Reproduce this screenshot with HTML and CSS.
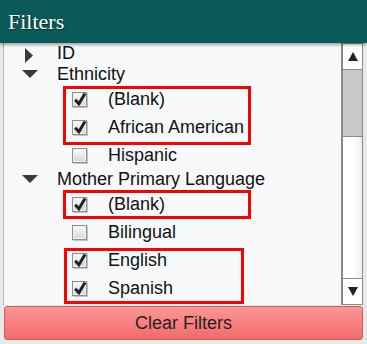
FILE: index.html
```html
<!DOCTYPE html>
<html lang="en">
<head>
	<meta charset="utf-8" />
	<title>Filters</title>
	<link rel="stylesheet" href="styles.css">
</head>
<body>
	<div class="panel">
		<div class="header">Filters</div>
		<div class="body">
			<div class="list">
				<div class="group-row">
					<svg class="caret" width="16" height="21" viewBox="0 0 16 21"><polygon points="3,5 11,12.5 3,20" /></svg>
					<span>ID</span>
				</div>
				<div class="group-row">
					<svg class="caret" width="16" height="21" viewBox="0 0 16 21"><polygon points="0,6 16,6 8,14" /></svg>
					<span>Ethnicity</span>
				</div>
				<div class="item"><span class="cb"><svg width="13" height="13" viewBox="0 0 13 13"><path d="M2.2 6.8 L5.9 10.8 L12 0.6" /></svg></span><span>(Blank)</span></div>
				<div class="item"><span class="cb"><svg width="13" height="13" viewBox="0 0 13 13"><path d="M2.2 6.8 L5.9 10.8 L12 0.6" /></svg></span><span>African American</span></div>
				<div class="item"><span class="cb"></span><span>Hispanic</span></div>
				<div class="group-row">
					<svg class="caret" width="16" height="21" viewBox="0 0 16 21"><polygon points="0,6 16,6 8,14" /></svg>
					<span>Mother Primary Language</span>
				</div>
				<div class="item"><span class="cb"><svg width="13" height="13" viewBox="0 0 13 13"><path d="M2.2 6.8 L5.9 10.8 L12 0.6" /></svg></span><span>(Blank)</span></div>
				<div class="item"><span class="cb"></span><span>Bilingual</span></div>
				<div class="item"><span class="cb"><svg width="13" height="13" viewBox="0 0 13 13"><path d="M2.2 6.8 L5.9 10.8 L12 0.6" /></svg></span><span>English</span></div>
				<div class="item"><span class="cb"><svg width="13" height="13" viewBox="0 0 13 13"><path d="M2.2 6.8 L5.9 10.8 L12 0.6" /></svg></span><span>Spanish</span></div>

				<!-- highlight marks drawn over the list -->
				<div class="mark mark-a"></div>
				<div class="mark mark-b"></div>
				<div class="mark mark-c"></div>
			</div>
			<div class="scrollbar">
				<div class="sb-btn sb-up"><span class="arrow-up"></span></div>
				<div class="sb-thumb"></div>
				<div class="sb-track"></div>
				<div class="sb-btn sb-down"><span class="arrow-down"></span></div>
			</div>
		</div>
		<button class="clear">Clear Filters</button>
	</div>
</body>
</html>
```

FILE: styles.css
```css
body {
	margin: 0;
	background-color: #e9e9e9;
	font-family: "Liberation Sans", Arial, sans-serif;
}

.panel {
	width: 367px;
	height: 344px;
	display: flex;
	flex-direction: column;
}

.header {
	height: 43px;
	box-sizing: border-box;
	padding: 8px 0 0 8px;
	font-family: "Liberation Serif", "Times New Roman", serif;
	font-size: 22px;
	line-height: 28px;
	color: #fff;
	text-shadow: 1px 1px 1px rgba(0,0,0,0.45);
	background-color: #0b5a5a;
	box-shadow: 0 2px 3px rgba(0,0,0,0.35);
	position: relative;
	z-index: 1;
}

.body {
	display: flex;
	height: 262px;
	margin: 0 4px 0 3px;
	border-left: 1px solid #b5b5b5;
	background-color: #f7f9fb;
}

.list {
	flex: 1;
	position: relative;
	overflow: hidden;
	color: #111;
	font-size: 18px;
}

.group-row {
	height: 21px;
	line-height: 21px;
	display: flex;
	align-items: center;
}

.caret {
	margin-left: 18px;
	margin-right: 19px;
	fill: #3a3a3a;
}

.item {
	height: 28px;
	line-height: 21px;
	display: flex;
	align-items: center;
}

.cb {
	display: flex;
	width: 13px;
	height: 13px;
	margin-left: 68px;
	margin-right: 21px;
	border: 1px solid #8f8f8f;
	background: linear-gradient(#fbfbfb, #d6d6d6);
	box-shadow: inset 0 0 0 1px #f2f2f2, 1px 1px 0 #c4c4c4;
}

.cb svg {
	overflow: visible;
}

.cb path {
	fill: none;
	stroke: #222;
	stroke-width: 3;
}

.mark {
	position: absolute;
	box-sizing: border-box;
	border: 3px solid #ff0000;
}

.mark-a {
	left: 59px;
	top: 43px;
	width: 188px;
	height: 59px;
}

.mark-b {
	left: 59px;
	top: 147px;
	width: 188px;
	height: 29px;
}

.mark-c {
	left: 60px;
	top: 205px;
	width: 180px;
	height: 56px;
}

.scrollbar {
	width: 22px;
	box-sizing: border-box;
	display: flex;
	flex-direction: column;
	border: 1px solid #8a8a8a;
	border-left-width: 2px;
	background: linear-gradient(to right, #ffffff 60%, #ececec);
}

.sb-btn {
	height: 26px;
	box-sizing: border-box;
	display: flex;
	align-items: center;
	justify-content: center;
	background-color: #fff;
}

.sb-up {
	border-bottom: 1px solid #8a8a8a;
}

.sb-down {
	border-top: 1px solid #8a8a8a;
}

.sb-thumb {
	height: 67px;
	box-sizing: border-box;
	background-color: #c8c8c8;
	border-bottom: 1px solid #8a8a8a;
}

.sb-track {
	flex: 1;
}

.arrow-up {
	width: 0;
	height: 0;
	border-left: 5px solid transparent;
	border-right: 5px solid transparent;
	border-bottom: 9px solid #222;
}

.arrow-down {
	width: 0;
	height: 0;
	border-left: 5px solid transparent;
	border-right: 5px solid transparent;
	border-top: 9px solid #222;
}

.clear {
	height: 34px;
	margin: 1px 4px 0 4px;
	padding: 0;
	border: 1px solid #c96060;
	border-radius: 3px;
	background: linear-gradient(#ff9696, #f06a6a);
	font-family: "Liberation Sans", Arial, sans-serif;
	font-size: 18px;
	color: #222;
}
```
